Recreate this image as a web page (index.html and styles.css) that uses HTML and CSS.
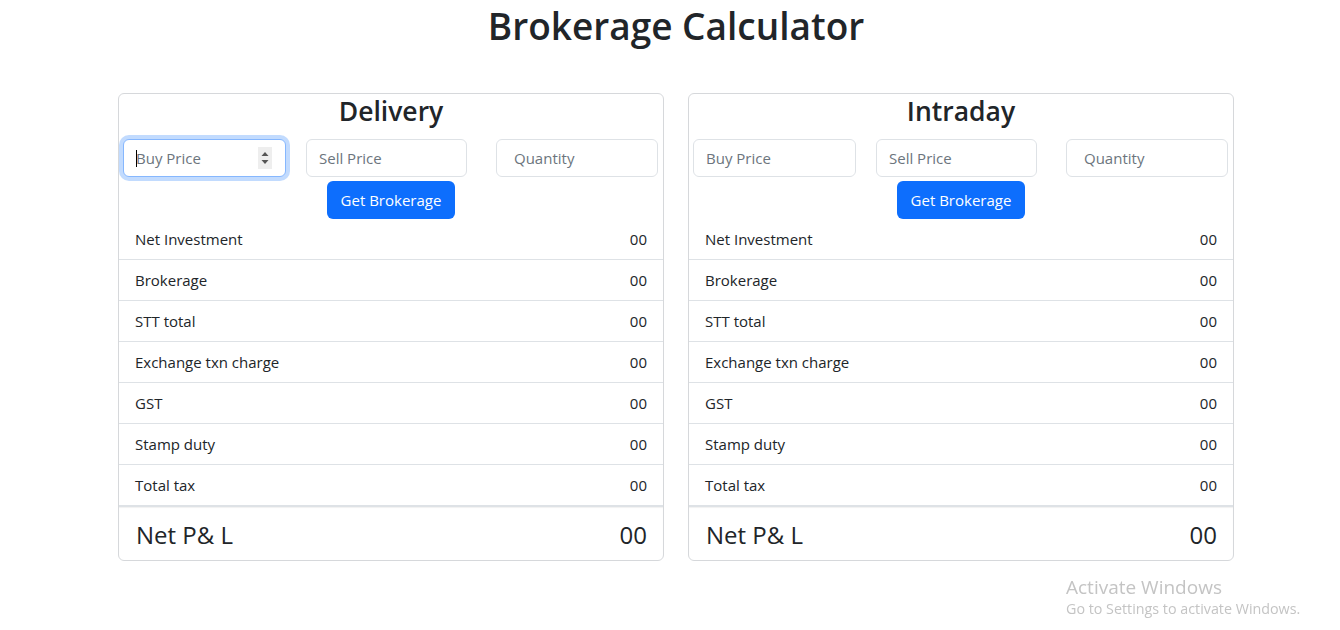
FILE: index.html
```html
<!DOCTYPE html>
<html lang="en">
<head>
<meta charset="utf-8">
<title>Brokerage Calculator</title>
<link rel="stylesheet" href="styles.css">
</head>
<body>
<div class="page">
  <h1 class="title">Brokerage Calculator</h1>
  <div class="cards">
    <section class="card">
      <h3 class="card-title">Delivery</h3>
      <div class="inputs">
        <div class="field focused">
          <input class="input" type="text" placeholder="Buy Price">
          <span class="caret"></span>
          <span class="spinner"><svg width="14" height="22" viewBox="0 0 14 22"><path d="M3.5 9 L7 5 L10.5 9 Z" fill="#555"/><path d="M3.5 13 L7 17 L10.5 13 Z" fill="#555"/></svg></span>
        </div>
        <div class="field w161"><input class="input" type="text" placeholder="Sell Price"></div>
        <div class="field qty"><input class="input" type="text" placeholder="Quantity"></div>
      </div>
      <div class="actions"><button class="btn">Get Brokerage</button></div>
      <ul class="list">
        <li class="row"><span>Net Investment</span><span>00</span></li>
        <li class="row"><span>Brokerage</span><span>00</span></li>
        <li class="row"><span>STT total</span><span>00</span></li>
        <li class="row"><span>Exchange txn charge</span><span>00</span></li>
        <li class="row"><span>GST</span><span>00</span></li>
        <li class="row"><span>Stamp duty</span><span>00</span></li>
        <li class="row"><span>Total tax</span><span>00</span></li>
      </ul>
      <div class="net"><span>Net P&amp; L</span><span>00</span></div>
    </section>
    <section class="card">
      <h3 class="card-title">Intraday</h3>
      <div class="inputs">
        <div class="field"><input class="input" type="text" placeholder="Buy Price"></div>
        <div class="field w161"><input class="input" type="text" placeholder="Sell Price"></div>
        <div class="field qty"><input class="input" type="text" placeholder="Quantity"></div>
      </div>
      <div class="actions"><button class="btn">Get Brokerage</button></div>
      <ul class="list">
        <li class="row"><span>Net Investment</span><span>00</span></li>
        <li class="row"><span>Brokerage</span><span>00</span></li>
        <li class="row"><span>STT total</span><span>00</span></li>
        <li class="row"><span>Exchange txn charge</span><span>00</span></li>
        <li class="row"><span>GST</span><span>00</span></li>
        <li class="row"><span>Stamp duty</span><span>00</span></li>
        <li class="row"><span>Total tax</span><span>00</span></li>
      </ul>
      <div class="net"><span>Net P&amp; L</span><span>00</span></div>
    </section>
  </div>
</div>
<div class="watermark">
  <div class="wm-title">Activate Windows</div>
  <div class="wm-sub">Go to Settings to activate Windows.</div>
</div>
</body>
</html>
```

FILE: styles.css
```css
* { box-sizing: border-box; }
html, body { margin: 0; padding: 0; background: #fff; }
body {
  font-family: "Open Sans", "Noto Sans", "Liberation Sans", sans-serif;
  color: #212529;
  font-size: 16px;
  line-height: 1.5;
}
.page {
  width: 1116px;
  margin-left: 118px;
}
.title {
  margin: 0;
  text-align: center;
  font-size: 37px;
  font-weight: 600;
  line-height: 51px;
}
.cards {
  display: flex;
  gap: 24px;
  margin-top: 42px;
}
.card {
  width: 546px;
  border: 1px solid #d6d8db;
  border-radius: 6px;
  background: #fff;
  overflow: hidden;
}
.card-title {
  margin: 0;
  text-align: center;
  font-size: 26.5px;
  font-weight: 600;
  line-height: 34px;
}
.inputs {
  display: flex;
  gap: 20px;
  padding: 0 4px;
  margin-top: 11px;
}
.field {
  position: relative;
  width: 163px;
  height: 38px;
}
.field.w161 { width: 161px; }
.field.qty { width: 162px; margin-left: 9px; }
.input {
  width: 100%;
  height: 100%;
  border: 1px solid #dee2e6;
  border-radius: 6px;
  padding: 0 12px;
  font-family: inherit;
  font-size: 15px;
  color: #212529;
  background: #fff;
  outline: none;
}
.field.qty .input { padding-left: 17px; }
.input::placeholder { color: #6c757d; opacity: 1; }
.field.focused .input {
  border-color: #86b7fe;
  box-shadow: 0 0 0 4px rgba(13, 110, 253, 0.25);
}
.caret {
  position: absolute;
  left: 13px;
  top: 11px;
  width: 1px;
  height: 17px;
  background: #000;
}
.spinner {
  position: absolute;
  right: 14px;
  top: 8px;
  width: 14px;
  height: 22px;
  background: #eee;
  display: flex;
}
.actions {
  display: flex;
  justify-content: center;
  margin-top: 4px;
}
.btn {
  width: 128px;
  height: 38px;
  border: 0;
  border-radius: 6px;
  background: #0d6efd;
  color: #fff;
  font-family: inherit;
  font-size: 15px;
  padding: 0;
}
.list {
  list-style: none;
  margin: 0;
  padding: 0;
}
.row {
  display: flex;
  justify-content: space-between;
  align-items: center;
  height: 41px;
  padding: 0 16px;
  border-bottom: 1px solid #dee2e6;
  font-size: 15px;
}
.net {
  display: flex;
  justify-content: space-between;
  align-items: center;
  height: 54px;
  padding: 2px 16px 0 17px;
  border-top: 1px solid #dee2e6;
  font-size: 24px;
  box-shadow: inset 0 1px 1px rgba(0,0,0,0.06);
}
.watermark {
  position: fixed;
  left: 1066px;
  top: 576px;
  color: #c4c4c4;
  font-family: "Open Sans", "Noto Sans", sans-serif;
}
.wm-title { font-size: 19px; line-height: 22px; }
.wm-sub { font-size: 14.3px; line-height: 21px; }
```
